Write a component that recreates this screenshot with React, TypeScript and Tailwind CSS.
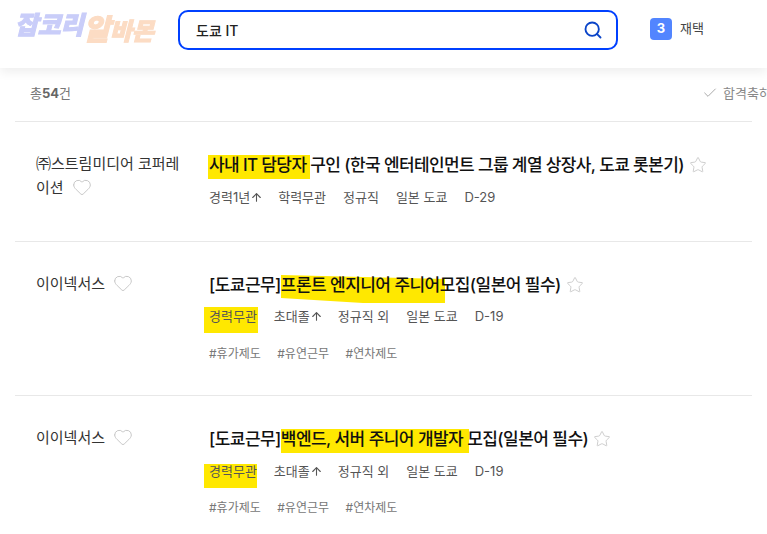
import React from "react";
import { Heart, Star, Check, Search, ArrowUp } from "lucide-react";

const font = { fontFamily: '"Inter","Noto Sans CJK KR",sans-serif' };

function Mark({ className }: { className: string }) {
  return <span className={`absolute bg-[#ffe800] -z-10 ${className}`} />;
}

function Meta({ items, className }: { items: React.ReactNode[]; className?: string }) {
  return (
    <div className={`flex items-center gap-[17px] text-[13px] leading-5 text-[#555] ${className ?? ""}`}>
      {items.map((t, i) => (
        <span key={i} className="flex items-center whitespace-nowrap">{t}</span>
      ))}
    </div>
  );
}

const Up = () => <ArrowUp size={13} strokeWidth={2} className="-mr-[2px]" />;

function Tags({ className }: { className: string }) {
  return (
    <div className={`flex gap-[16.5px] text-[12px] leading-5 text-[#777] ${className}`}>
      <span>#휴가제도</span>
      <span>#유연근무</span>
      <span>#연차제도</span>
    </div>
  );
}

function Row({
  company,
  title,
  meta,
  tags,
  className,
}: {
  company: React.ReactNode;
  title: React.ReactNode;
  meta: React.ReactNode;
  tags?: React.ReactNode;
  className: string;
}) {
  return (
    <div className={`flex border-b border-[#e8e8e8] pt-[29px] ${className}`}>
      <div className="ml-[21px] mt-px w-[173px] shrink-0 break-all pr-[22px] text-[15px] leading-6 text-[#333]">
        {company}
      </div>
      <div className="min-w-0 flex-1">
        {title}
        {meta}
        {tags}
      </div>
    </div>
  );
}

const HeartIcon = () => (
  <Heart size={20} strokeWidth={1} className="ml-2 inline-block align-[-4px] text-[#bdbdbd]" />
);
const StarIcon = () => <Star size={18} strokeWidth={1} className="ml-[5px] shrink-0 text-[#bdbdbd]" />;

const titleCls =
  "relative flex items-center whitespace-nowrap text-[17px] font-medium leading-7 text-[#111]";

export default function App() {
  return (
    <div className="relative isolate h-[534px] w-[767px] overflow-hidden bg-white" style={font}>
      <header className="relative flex h-[68px] items-start bg-white shadow-[0_4px_10px_rgba(0,0,0,0.07)]">
        <div className="flex w-[178px] items-end pl-[15px] pt-[13px] font-black italic tracking-[-0.2px]">
          <span className="mb-[7px] text-[25px] leading-[25px] text-[#c9cdf9] blur-[0.5px] [-webkit-text-stroke:1px_#c9cdf9]">잡코리</span>
          <span className="text-[29px] leading-[31px] text-[#fcdcc4] blur-[0.5px] [-webkit-text-stroke:1px_#fcdcc4]">알</span>
          <span className="mb-[1px] text-[24px] leading-[24px] text-[#fcdcc4] blur-[0.5px] [-webkit-text-stroke:1px_#fcdcc4]">바몬</span>
        </div>
        <div className="mt-[10px] flex h-[40px] w-[440px] items-center justify-between rounded-[10px] border-2 border-[#0040ff] pl-4 pr-[13px]">
          <span className="text-[14px] font-medium text-[#222]">도쿄 IT</span>
          <Search size={20} strokeWidth={2.25} className="text-[#0a44c8]" />
        </div>
        <div className="ml-[32px] mt-[18px] flex items-center">
          <span className="flex h-[22px] w-[22px] items-center justify-center rounded-[4px] bg-[#5285ff] text-[13px] font-bold text-white">3</span>
          <span className="ml-2 text-[13px] text-[#444]">재택</span>
        </div>
      </header>

      <div className="flex h-[53px] items-start justify-between pl-[30px] pt-[15px] text-[13px] leading-5 text-[#777]">
        <div>
          총<b className="font-bold text-[#666]">54</b>건
        </div>
        <div className="flex w-[65px] shrink-0 items-center whitespace-nowrap text-[#888]">
          <Check size={16} strokeWidth={1.5} className="mr-[5px] shrink-0 text-[#aaa]" />
          합격축하
        </div>
      </div>

      <div className="mx-[15px] border-t border-[#e8e8e8]">
        <Row
          className="h-[120px]"
          company={<>㈜스트림미디어 코퍼레이션<HeartIcon /></>}
          title={
            <div className={`${titleCls} tracking-[-0.62px]`}>
              <Mark className="-left-[1px] top-[4px] h-[24px] w-[102px]" />
              사내 IT 담당자&nbsp;구인 (한국 엔터테인먼트 그룹 계열 상장사, 도쿄 롯본기)
              <StarIcon />
            </div>
          }
          meta={<Meta className="mt-[8px]" items={[<>경력1년<Up /></>, "학력무관", "정규직", "일본 도쿄", "D-29"]} />}
        />
        <Row
          className="h-[154px]"
          company={<>이이넥서스<HeartIcon /></>}
          title={
            <div className={`${titleCls} tracking-[-0.55px]`}>
              <Mark className="left-[72px] top-[4px] h-[28px] w-[164px] [clip-path:polygon(0_0,100%_14%,100%_100%,50%_100%,0_82%)]" />
              [도쿄근무]프론트 엔지니어 주니어모집(일본어 필수)
              <StarIcon />
            </div>
          }
          meta={
            <div className="relative">
              <Mark className="-left-[5px] top-[1px] h-[26px] w-[54px]" />
              <Meta className="mt-[7px]" items={["경력무관", <>초대졸<Up /></>, "정규직 외", "일본 도쿄", "D-19"]} />
            </div>
          }
          tags={<Tags className="mt-[18px]" />}
        />
        <Row
          className="h-[154px] border-b-0"
          company={<>이이넥서스<HeartIcon /></>}
          title={
            <div className={`${titleCls} tracking-[-0.55px]`}>
              <Mark className="left-[72px] top-[4px] h-[24px] w-[188px]" />
              [도쿄근무]백엔드, 서버 주니어 개발자 모집(일본어 필수)
              <StarIcon />
            </div>
          }
          meta={
            <div className="relative">
              <Mark className="-left-[5px] top-[3px] h-[24px] w-[53px]" />
              <Meta className="mt-[8px]" items={["경력무관", <>초대졸<Up /></>, "정규직 외", "일본 도쿄", "D-19"]} />
            </div>
          }
          tags={<Tags className="mt-[17px]" />}
        />
      </div>
    </div>
  );
}
